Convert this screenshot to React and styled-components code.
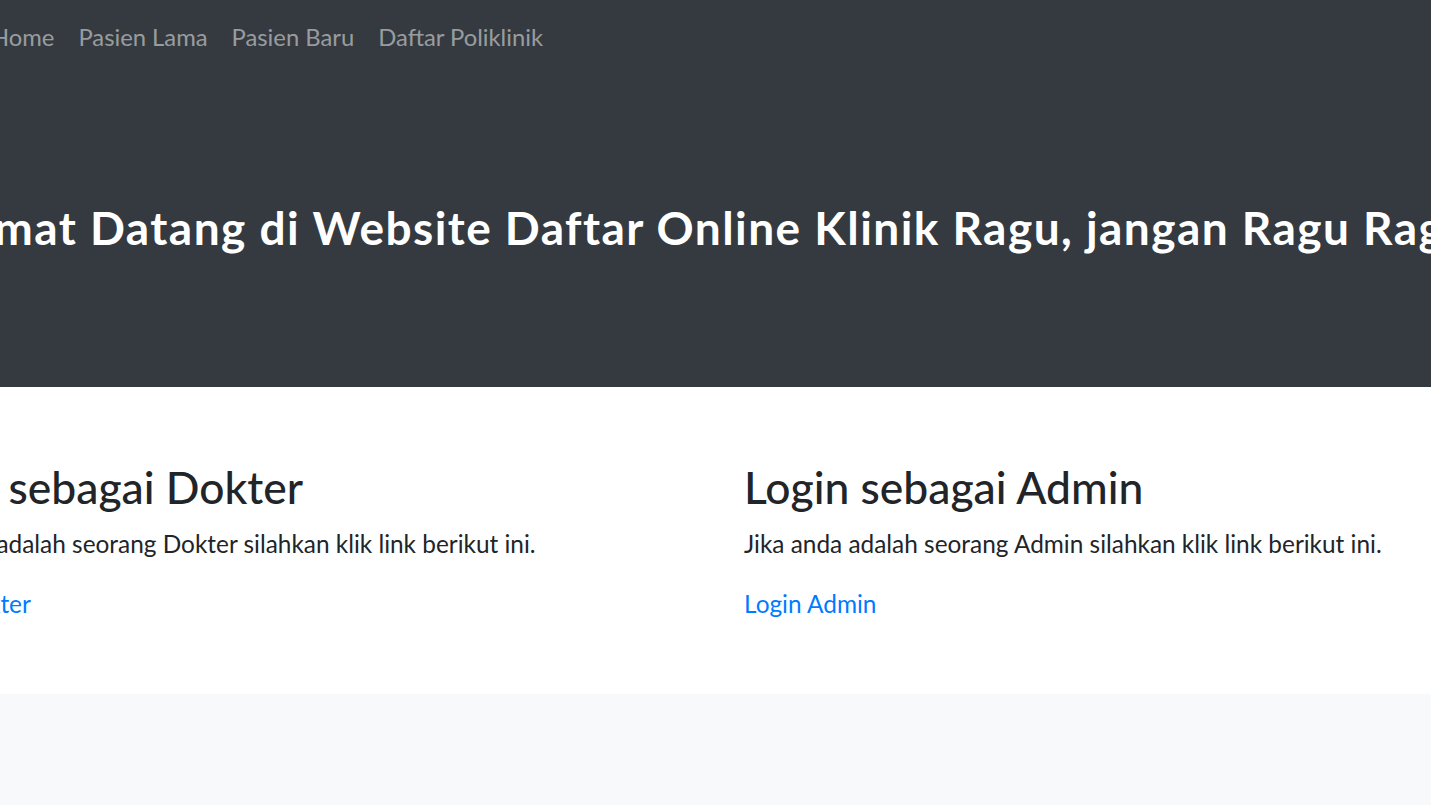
import React from "react";
import styled, { createGlobalStyle } from "styled-components";

const GlobalStyle = createGlobalStyle`
  html, body {
    margin: 0;
    padding: 0;
    overflow: hidden;
    background-color: #f8f9fa;
    font-family: Lato, "Open Sans", sans-serif;
    color: #212529;
  }
`;

const Dark = styled.header`
  background-color: #343a40;
  height: 387px;
  display: flex;
  flex-direction: column;
`;

const Navbar = styled.nav`
  height: 74px;
  display: flex;
  align-items: center;
`;

const NavList = styled.ul`
  display: flex;
  list-style: none;
  margin: 0 0 0 -21px;
  padding: 0;
`;

const NavLink = styled.a`
  display: block;
  padding: 0 12px;
  font-size: 23.8px;
  line-height: 36px;
  color: rgba(255, 255, 255, 0.5);
  text-decoration: none;
  white-space: nowrap;
`;

const Hero = styled.section`
  flex: 1;
  display: flex;
  align-items: center;
  overflow: hidden;
  padding-bottom: 6px;
`;

const Headline = styled.h1`
  margin: 0 0 0 -96px;
  font-size: 46px;
  font-weight: 700;
  letter-spacing: 1.45px;
  line-height: 1.2;
  color: #fff;
  white-space: nowrap;
`;

const Main = styled.main`
  background-color: #fff;
  padding: 73px 0 71px;
  overflow: hidden;
`;

const Row = styled.div`
  display: grid;
  grid-template-columns: 852px 852px;
  margin-left: -108px;
`;

const Col = styled.div`
  min-width: 0;
`;

const Title = styled.h2`
  margin: 0 0 13px;
  font-size: 44.4px;
  font-weight: 500;
  line-height: 1.2;
  white-space: nowrap;
`;

const Text = styled.p`
  margin: 0 0 23px;
  font-size: 24.4px;
  line-height: 1.5;
  white-space: nowrap;
`;

const Link = styled.a`
  display: block;
  font-size: 24.4px;
  line-height: 1.5;
  color: #007bff;
  text-decoration: none;
`;

const navItems = ["Home", "Pasien Lama", "Pasien Baru", "Daftar Poliklinik"];

const roles = ["Dokter", "Admin"];

export default function App() {
  return (
    <>
      <GlobalStyle />
      <Dark>
        <Navbar>
          <NavList>
            {navItems.map((item) => (
              <li key={item}>
                <NavLink href="#">{item}</NavLink>
              </li>
            ))}
          </NavList>
        </Navbar>
        <Hero>
          <Headline>
            Selamat Datang di Website Daftar Online Klinik Ragu, jangan Ragu Ragu
          </Headline>
        </Hero>
      </Dark>
      <Main>
        <Row>
          {roles.map((role) => (
            <Col key={role}>
              <Title>Login sebagai {role}</Title>
              <Text>
                Jika anda adalah seorang {role} silahkan klik link berikut ini.
              </Text>
              <Link href="#">Login {role}</Link>
            </Col>
          ))}
        </Row>
      </Main>
    </>
  );
}
